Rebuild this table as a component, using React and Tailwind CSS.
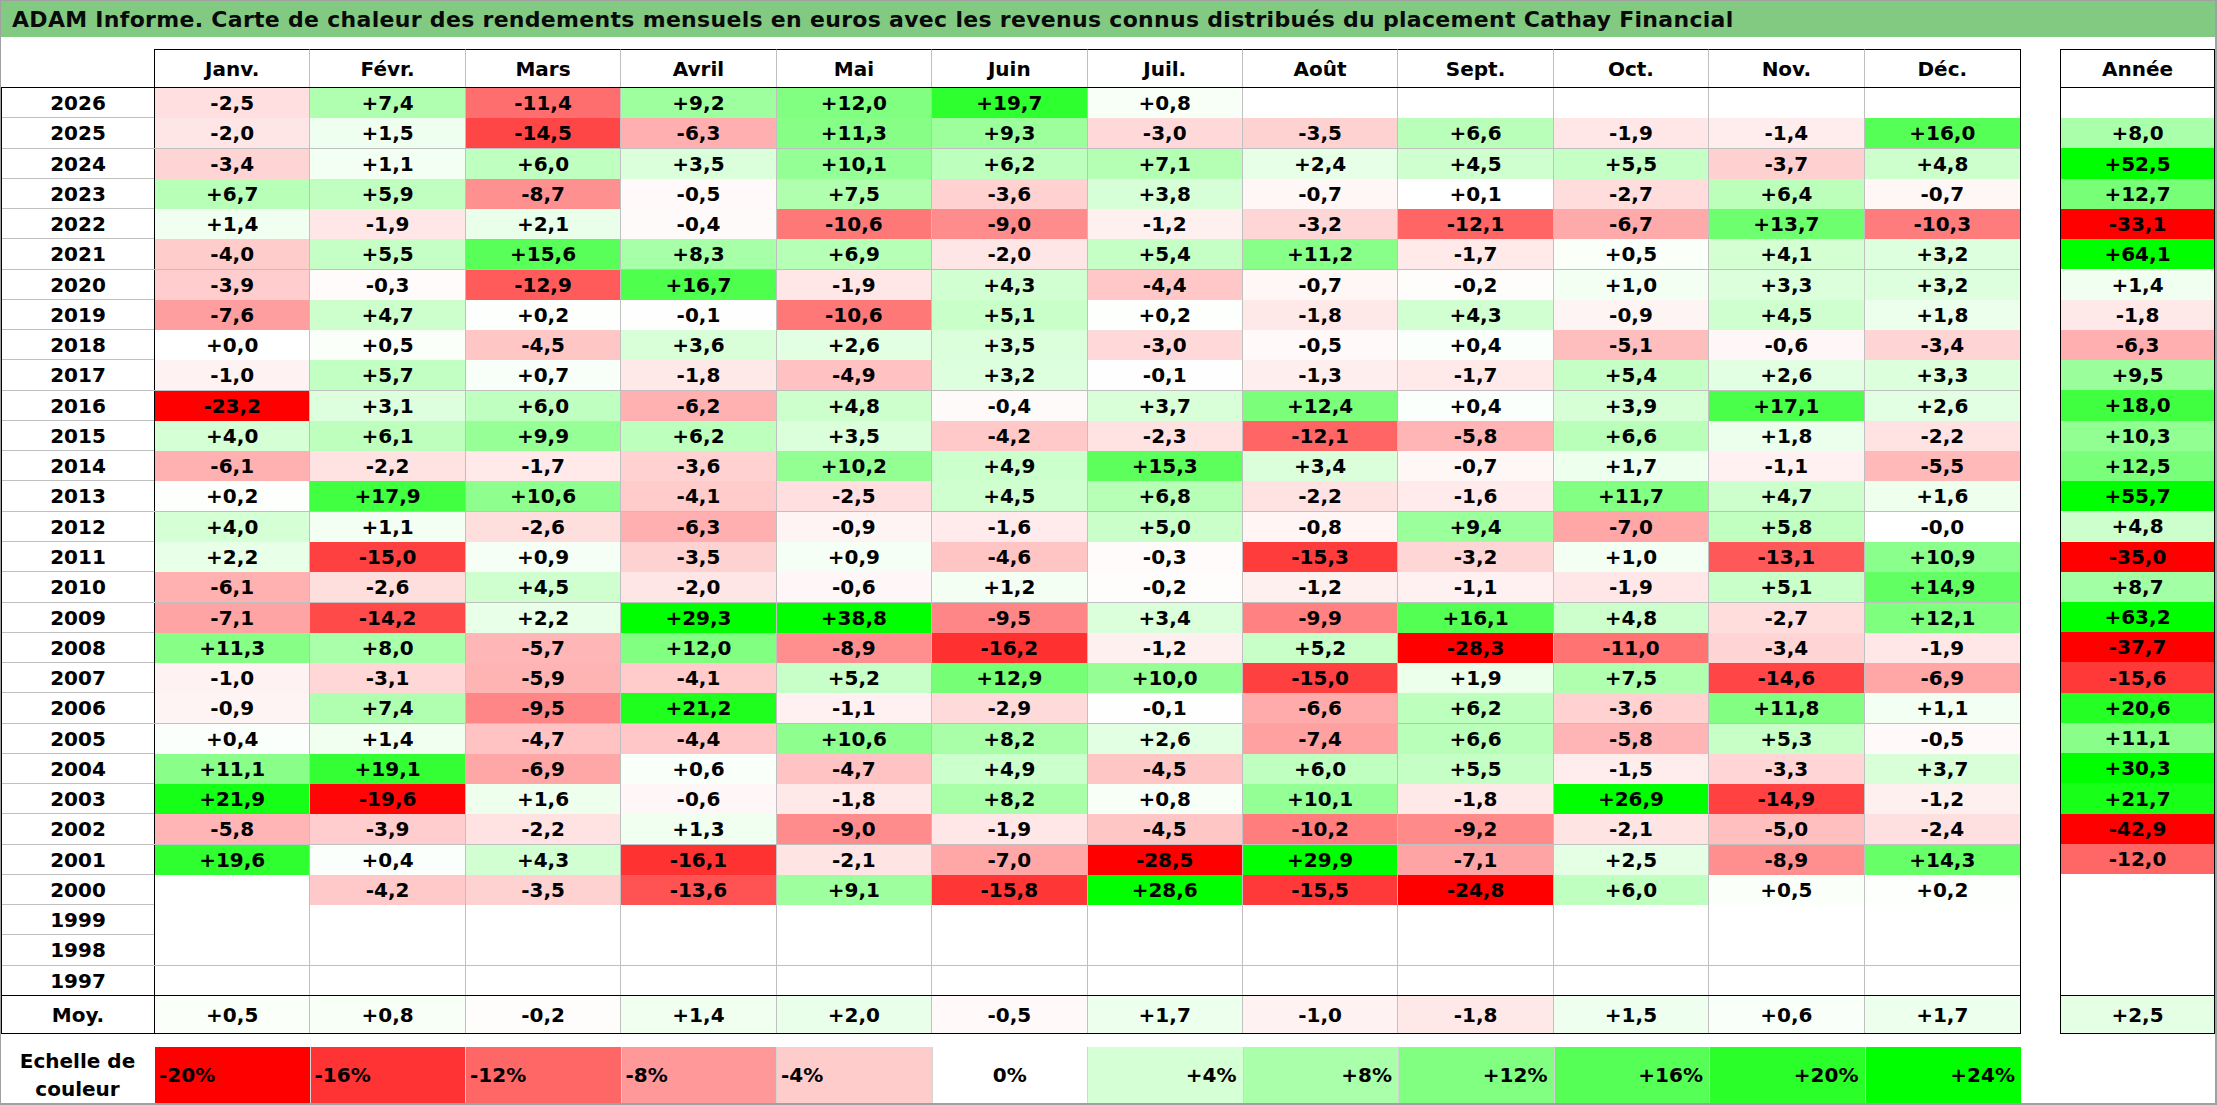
import React from 'react';

const months = ['Janv.', 'Févr.', 'Mars', 'Avril', 'Mai', 'Juin', 'Juil.', 'Août', 'Sept.', 'Oct.', 'Nov.', 'Déc.'];

const raw = [
  ['2026', '-2,5 +7,4 -11,4 +9,2 +12,0 +19,7 +0,8 . . . . .', '.'],
  ['2025', '-2,0 +1,5 -14,5 -6,3 +11,3 +9,3 -3,0 -3,5 +6,6 -1,9 -1,4 +16,0', '+8,0'],
  ['2024', '-3,4 +1,1 +6,0 +3,5 +10,1 +6,2 +7,1 +2,4 +4,5 +5,5 -3,7 +4,8', '+52,5'],
  ['2023', '+6,7 +5,9 -8,7 -0,5 +7,5 -3,6 +3,8 -0,7 +0,1 -2,7 +6,4 -0,7', '+12,7'],
  ['2022', '+1,4 -1,9 +2,1 -0,4 -10,6 -9,0 -1,2 -3,2 -12,1 -6,7 +13,7 -10,3', '-33,1'],
  ['2021', '-4,0 +5,5 +15,6 +8,3 +6,9 -2,0 +5,4 +11,2 -1,7 +0,5 +4,1 +3,2', '+64,1'],
  ['2020', '-3,9 -0,3 -12,9 +16,7 -1,9 +4,3 -4,4 -0,7 -0,2 +1,0 +3,3 +3,2', '+1,4'],
  ['2019', '-7,6 +4,7 +0,2 -0,1 -10,6 +5,1 +0,2 -1,8 +4,3 -0,9 +4,5 +1,8', '-1,8'],
  ['2018', '+0,0 +0,5 -4,5 +3,6 +2,6 +3,5 -3,0 -0,5 +0,4 -5,1 -0,6 -3,4', '-6,3'],
  ['2017', '-1,0 +5,7 +0,7 -1,8 -4,9 +3,2 -0,1 -1,3 -1,7 +5,4 +2,6 +3,3', '+9,5'],
  ['2016', '-23,2 +3,1 +6,0 -6,2 +4,8 -0,4 +3,7 +12,4 +0,4 +3,9 +17,1 +2,6', '+18,0'],
  ['2015', '+4,0 +6,1 +9,9 +6,2 +3,5 -4,2 -2,3 -12,1 -5,8 +6,6 +1,8 -2,2', '+10,3'],
  ['2014', '-6,1 -2,2 -1,7 -3,6 +10,2 +4,9 +15,3 +3,4 -0,7 +1,7 -1,1 -5,5', '+12,5'],
  ['2013', '+0,2 +17,9 +10,6 -4,1 -2,5 +4,5 +6,8 -2,2 -1,6 +11,7 +4,7 +1,6', '+55,7'],
  ['2012', '+4,0 +1,1 -2,6 -6,3 -0,9 -1,6 +5,0 -0,8 +9,4 -7,0 +5,8 -0,0', '+4,8'],
  ['2011', '+2,2 -15,0 +0,9 -3,5 +0,9 -4,6 -0,3 -15,3 -3,2 +1,0 -13,1 +10,9', '-35,0'],
  ['2010', '-6,1 -2,6 +4,5 -2,0 -0,6 +1,2 -0,2 -1,2 -1,1 -1,9 +5,1 +14,9', '+8,7'],
  ['2009', '-7,1 -14,2 +2,2 +29,3 +38,8 -9,5 +3,4 -9,9 +16,1 +4,8 -2,7 +12,1', '+63,2'],
  ['2008', '+11,3 +8,0 -5,7 +12,0 -8,9 -16,2 -1,2 +5,2 -28,3 -11,0 -3,4 -1,9', '-37,7'],
  ['2007', '-1,0 -3,1 -5,9 -4,1 +5,2 +12,9 +10,0 -15,0 +1,9 +7,5 -14,6 -6,9', '-15,6'],
  ['2006', '-0,9 +7,4 -9,5 +21,2 -1,1 -2,9 -0,1 -6,6 +6,2 -3,6 +11,8 +1,1', '+20,6'],
  ['2005', '+0,4 +1,4 -4,7 -4,4 +10,6 +8,2 +2,6 -7,4 +6,6 -5,8 +5,3 -0,5', '+11,1'],
  ['2004', '+11,1 +19,1 -6,9 +0,6 -4,7 +4,9 -4,5 +6,0 +5,5 -1,5 -3,3 +3,7', '+30,3'],
  ['2003', '+21,9 -19,6 +1,6 -0,6 -1,8 +8,2 +0,8 +10,1 -1,8 +26,9 -14,9 -1,2', '+21,7'],
  ['2002', '-5,8 -3,9 -2,2 +1,3 -9,0 -1,9 -4,5 -10,2 -9,2 -2,1 -5,0 -2,4', '-42,9'],
  ['2001', '+19,6 +0,4 +4,3 -16,1 -2,1 -7,0 -28,5 +29,9 -7,1 +2,5 -8,9 +14,3', '-12,0'],
  ['2000', '. -4,2 -3,5 -13,6 +9,1 -15,8 +28,6 -15,5 -24,8 +6,0 +0,5 +0,2', '.'],
  ['1999', '. . . . . . . . . . . .', '.'],
  ['1998', '. . . . . . . . . . . .', '.'],
  ['1997', '. . . . . . . . . . . .', '.'],
];

const rows = raw.map(([y, m, a]) => ({
  year: y,
  vals: m.split(' ').map((v) => (v === '.' ? '' : v)),
  annual: a === '.' ? '' : a,
}));

const moy = '+0,5 +0,8 -0,2 +1,4 +2,0 -0,5 +1,7 -1,0 -1,8 +1,5 +0,6 +1,7'.split(' ');
const moyAnnual = '+2,5';

const scale = [
  { t: '-20%', v: -20 },
  { t: '-16%', v: -16 },
  { t: '-12%', v: -12 },
  { t: '-8%', v: -8 },
  { t: '-4%', v: -4 },
  { t: '0%', v: 0 },
  { t: '+4%', v: 4 },
  { t: '+8%', v: 8 },
  { t: '+12%', v: 12 },
  { t: '+16%', v: 16 },
  { t: '+20%', v: 20 },
  { t: '+24%', v: 24 },
];

function colorFor(v) {
  if (v === '' || v === null || v === undefined) return '#ffffff';
  const n = typeof v === 'number' ? v : parseFloat(String(v).replace(',', '.'));
  if (isNaN(n) || n === 0) return '#ffffff';
  if (n > 0) {
    const t = Math.min(n / 24, 1);
    const c = Math.round(255 * (1 - t));
    return `rgb(${c},255,${c})`;
  }
  const t = Math.min(-n / 20, 1);
  const c = Math.round(255 * (1 - t));
  return `rgb(255,${c},${c})`;
}

const grid = 'grid grid-cols-[153px_repeat(12,minmax(0,1fr))]';

function DataRow({ row, last }) {
  return (
    <div className={`${grid} flex-1 min-h-0 ${last ? '' : 'border-b border-[#c0c0c0]'}`}>
      <div className="flex items-center justify-center border-r border-black">{row.year}</div>
      {row.vals.map((v, i) => (
        <div
          key={i}
          className={`flex items-center justify-center ${i === 11 ? '' : 'border-r border-[#c0c0c0]'}`}
          style={{ backgroundColor: colorFor(v) }}
        >
          {v}
        </div>
      ))}
    </div>
  );
}

export default function App() {
  return (
    <div className="w-[2217px] h-[1105px] box-border bg-white border-t border-l border-r-2 border-b-2 border-[#a0a0a0] flex flex-col overflow-hidden font-['DejaVu_Sans',sans-serif] font-bold text-[20px] text-black">
      {/* Title bar */}
      <div className="h-[36px] shrink-0 bg-[#82ca82] flex items-center pl-[11px] text-[22px] tracking-[0.3px] text-[#0a0a0a] whitespace-nowrap">
        ADAM Informe. Carte de chaleur des rendements mensuels en euros avec les revenus connus distribués du placement Cathay Financial
      </div>

      <div className="h-[12px] shrink-0" />

      {/* Header row */}
      <div className="flex h-[38px] shrink-0">
        <div className={`${grid} w-[2020px] pl-px border-r border-black`}>
          <div className="border-r border-black" />
          {months.map((m, i) => (
            <div
              key={m}
              className={`flex items-center justify-center border-t border-black ${i === 11 ? '' : 'border-r border-r-[#c0c0c0]'}`}
            >
              {m}
            </div>
          ))}
        </div>
        <div className="w-[39px]" />
        <div className="w-[155px] border border-b-0 border-black flex items-center justify-center">Année</div>
      </div>

      {/* Body */}
      <div className="flex h-[947px] shrink-0">
        <div className="w-[2020px] border border-black flex flex-col">
          <div className="flex-1 min-h-0 flex flex-col">
            {rows.map((r, i) => (
              <DataRow key={r.year} row={r} last={i === rows.length - 1} />
            ))}
          </div>
          <div className={`${grid} h-[38px] shrink-0 border-t border-black`}>
            <div className="flex items-center justify-center border-r border-black">Moy.</div>
            {moy.map((v, i) => (
              <div
                key={i}
                className={`flex items-center justify-center ${i === 11 ? '' : 'border-r border-[#c0c0c0]'}`}
                style={{ backgroundColor: colorFor(v) }}
              >
                {v}
              </div>
            ))}
          </div>
        </div>
        <div className="w-[39px]" />
        <div className="w-[155px] border border-black flex flex-col">
          <div className="flex-1 min-h-0 flex flex-col">
            {rows.map((r) => (
              <div
                key={r.year}
                className="flex-1 min-h-0 flex items-center justify-center"
                style={{ backgroundColor: colorFor(r.annual) }}
              >
                {r.annual}
              </div>
            ))}
          </div>
          <div
            className="h-[38px] shrink-0 border-t border-black flex items-center justify-center"
            style={{ backgroundColor: colorFor(moyAnnual) }}
          >
            {moyAnnual}
          </div>
        </div>
      </div>

      {/* Colour scale */}
      <div className="h-[13px] shrink-0" />
      <div className={`${grid} w-[2020px] h-[56px] shrink-0 pl-px`}>
        <div className="flex flex-col items-center justify-center leading-[28px] pr-[2px]">
          <span>Echelle de</span>
          <span>couleur</span>
        </div>
        {scale.map((s, i) => (
          <div
            key={s.t}
            className={`flex items-center ${s.v < 0 ? 'justify-start pl-[4px]' : s.v === 0 ? 'justify-center' : 'justify-end pr-[6px]'} ${i === 11 ? '' : 'border-r border-[#d4d4d4]'}`}
            style={{ backgroundColor: colorFor(s.v) }}
          >
            {s.t}
          </div>
        ))}
      </div>
    </div>
  );
}
